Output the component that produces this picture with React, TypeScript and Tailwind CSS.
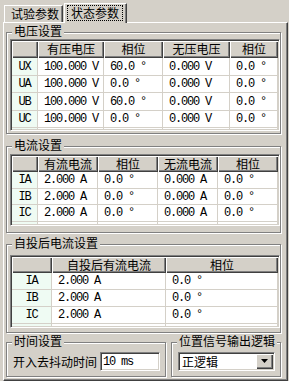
import React from "react";

const CJK = "font-['Noto_Sans_CJK_SC','Noto_Sans_CJK_JP',sans-serif] text-[12px] leading-[14px]";
const MONO = "font-['Liberation_Mono',monospace] text-[12px] leading-[14px] tracking-[-1.2px]";
const HDR =
  "bg-[#d4d0c8] shadow-[inset_1px_1px_0_#fff,inset_-1px_-1px_0_#404040,inset_-2px_-2px_0_#808080] flex items-center justify-center text-black";

type TableProps = {
  widths: number[];
  headers: string[];
  headerH: number;
  rowHs: number[];
  rows: string[][];
  extra: number;
  mt: number;
};

function Grid({ widths, headers, headerH, rowHs, rows, extra, mt }: TableProps) {
  return (
    <div
      className="ml-[3px] w-[270px] border border-t-[#808080] border-l-[#808080] border-r-white border-b-white p-[1px] shadow-[inset_1px_1px_0_#404040,inset_-1px_-1px_0_#d4d0c8] bg-white"
      style={{ marginTop: mt }}
    >
      <div className="flex" style={{ height: headerH }}>
        {headers.map((h, i) => (
          <div key={i} className={`${HDR} ${CJK} pb-[1px]`} style={{ width: widths[i] }}>
            {h}
          </div>
        ))}
      </div>
      {rows.map((r, ri) => (
        <div key={ri} className="flex" style={{ height: rowHs[ri] }}>
          {r.map((c, ci) => (
            <div
              key={ci}
              className={`border-r border-b border-[#d4d0c8] flex items-center ${MONO} text-black ${
                ci === 0 ? "bg-[#effbf3] justify-center" : "bg-white pl-[6px]"
              }`}
              style={{ width: widths[ci] }}
            >
              {c}
            </div>
          ))}
        </div>
      ))}
      <div className="flex" style={{ height: extra }}>
        {widths.map((w, i) => (
          <div
            key={i}
            className={`border-r border-[#d4d0c8] ${i === 0 ? "bg-[#effbf3]" : "bg-white"}`}
            style={{ width: w }}
          />
        ))}
      </div>
    </div>
  );
}

function Group({
  title,
  className,
  children,
}: {
  title: string;
  className: string;
  children?: React.ReactNode;
}) {
  return (
    <div
      className={`relative border border-[#808080] shadow-[inset_1px_1px_0_#fff,1px_1px_0_#fff] ${className}`}
    >
      <div className={`absolute left-[5px] top-[-9px] bg-[#d4d0c8] px-[2px] ${CJK} text-black`}>
        {title}
      </div>
      {children}
    </div>
  );
}

export default function App() {
  const deg = "°";
  return (
    <div className="w-[289px] h-[381px] overflow-hidden bg-[#d4d0c8] text-black">
      {/* tabs */}
      <div className="h-[22px] flex items-end relative z-10">
        <div
          className={`ml-[4px] w-[59px] h-[17px] border-l border-t border-white border-r border-r-[#404040] shadow-[inset_-1px_0_0_#808080] flex items-center pl-[6px] ${CJK}`}
        >
          试验参数
        </div>
        <div
          className={`ml-[1px] w-[63px] h-[20px] mb-[-1px] bg-[#d4d0c8] border-l border-t border-white border-r border-r-[#404040] shadow-[inset_-1px_0_0_#808080] flex items-start pt-[1px] pl-[2px] ${CJK}`}
        >
          <div className="border border-dotted border-black px-[3px] py-[0px] h-[16px] flex items-center">
            状态参数
          </div>
        </div>
      </div>
      {/* panel */}
      <div className="ml-[3px] w-[285px] h-[359px] border-l border-t border-white border-r border-b border-r-[#404040] border-b-[#404040] shadow-[inset_-1px_-1px_0_#808080] pl-[2px] flex flex-col">
        <Group title="电压设置" className="mt-[9px] w-[275px] h-[102px]">
          <Grid
            mt={6}
            widths={[26, 66, 59, 67, 48]}
            headers={["", "有压电压", "相位", "无压电压", "相位"]}
            headerH={17}
            rowHs={[18, 17, 18, 17]}
            extra={1}
            rows={[
              ["UX", "100.000 V", `60.0 ${deg}`, "0.000 V", `0.0 ${deg}`],
              ["UA", "100.000 V", `0.0 ${deg}`, "0.000 V", `0.0 ${deg}`],
              ["UB", "100.000 V", `60.0 ${deg}`, "0.000 V", `0.0 ${deg}`],
              ["UC", "100.000 V", `0.0 ${deg}`, "0.000 V", `0.0 ${deg}`],
            ]}
          />
        </Group>
        <Group title="电流设置" className="mt-[12px] w-[275px] h-[87px]">
          <Grid
            mt={7}
            widths={[26, 60, 60, 60, 60]}
            headers={["", "有流电流", "相位", "无流电流", "相位"]}
            headerH={16}
            rowHs={[17, 16, 17]}
            extra={2}
            rows={[
              ["IA", "2.000 A", `0.0 ${deg}`, "0.000 A", `0.0 ${deg}`],
              ["IB", "2.000 A", `0.0 ${deg}`, "0.000 A", `0.0 ${deg}`],
              ["IC", "2.000 A", `0.0 ${deg}`, "0.000 A", `0.0 ${deg}`],
            ]}
          />
        </Group>
        <Group title="自投后电流设置" className="mt-[11px] w-[275px] h-[89px]">
          <Grid
            mt={10}
            widths={[40, 114, 112]}
            headers={["", "自投后有流电流", "相位"]}
            headerH={16}
            rowHs={[17, 17, 17]}
            extra={2}
            rows={[
              ["IA", "2.000 A", `0.0 ${deg}`],
              ["IB", "2.000 A", `0.0 ${deg}`],
              ["IC", "2.000 A", `0.0 ${deg}`],
            ]}
          />
        </Group>
        <div className="mt-[9px] flex">
          <Group title="时间设置" className="w-[160px] h-[35px]">
            <div className="flex items-center mt-[9px] ml-[6px]">
              <span className={CJK}>开入去抖动时间</span>
              <div
                className={`ml-[3px] w-[60px] h-[19px] bg-white border border-t-[#808080] border-l-[#808080] border-r-white border-b-white shadow-[inset_1px_1px_0_#404040,inset_-1px_-1px_0_#d4d0c8] flex items-center pl-[2px] ${MONO}`}
              >
                10 ms
              </div>
            </div>
          </Group>
          <Group title="位置信号输出逻辑" className="ml-[5px] w-[110px] h-[35px]">
            <div
              className="mt-[9px] ml-[6px] w-[97px] h-[19px] bg-white border border-t-[#808080] border-l-[#808080] border-r-white border-b-white shadow-[inset_1px_1px_0_#404040,inset_-1px_-1px_0_#d4d0c8] p-[1px] flex items-center"
            >
              <span className={`flex-1 pl-[2px] ${CJK}`}>正逻辑</span>
              <div className="w-[17px] h-[15px] bg-[#d4d0c8] shadow-[inset_1px_1px_0_#fff,inset_-1px_-1px_0_#404040,inset_-2px_-2px_0_#808080] flex items-center justify-center">
                <svg width="7" height="4" viewBox="0 0 7 4" className="mb-[1px]">
                  <path d="M0 0H7L3.5 4Z" fill="#000" />
                </svg>
              </div>
            </div>
          </Group>
        </div>
      </div>
    </div>
  );
}
